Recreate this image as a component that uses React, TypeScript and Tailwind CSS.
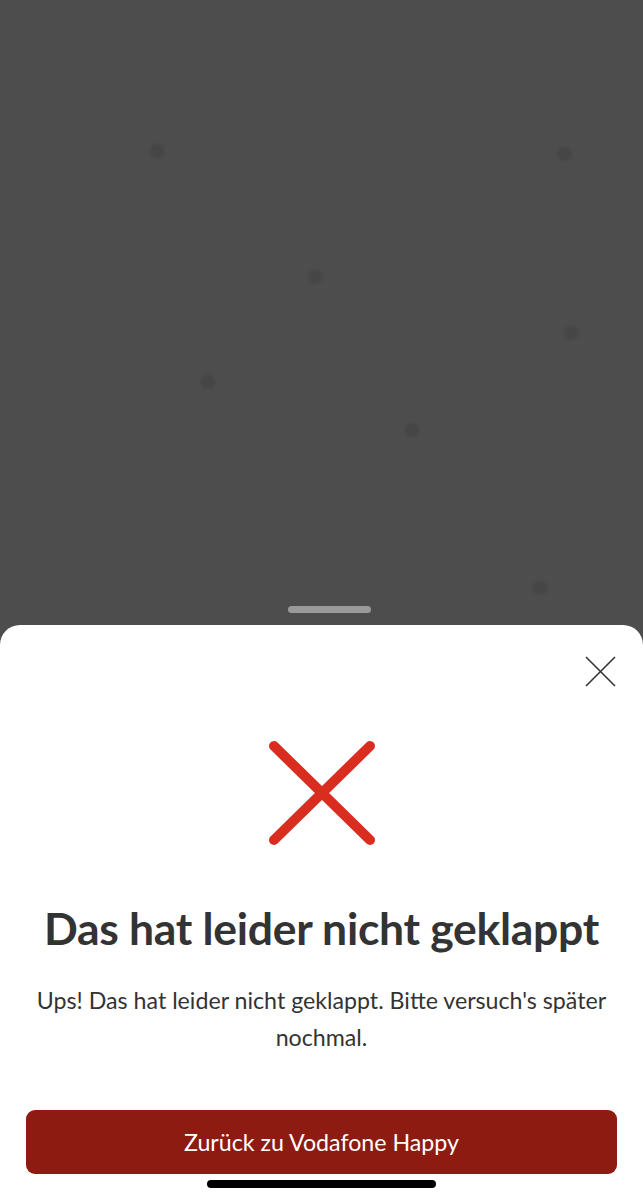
import React from 'react';

const dots = [
  { x: 157, y: 151 },
  { x: 565, y: 154 },
  { x: 315, y: 277 },
  { x: 571, y: 333 },
  { x: 208, y: 382 },
  { x: 412, y: 430 },
  { x: 540, y: 588 },
];

const App: React.FC = () => {
  return (
    <div className="w-[643px] h-[1200px] flex flex-col bg-[#4d4d4d] overflow-hidden" style={{ fontFamily: 'Lato, "Open Sans", sans-serif' }}>
      <div className="relative h-[625px] shrink-0">
        {dots.map((d, i) => (
          <span
            key={i}
            className="absolute w-[14px] h-[14px] rounded-full bg-[#464646] blur-[1px]"
            style={{ left: d.x - 7, top: d.y - 7 }}
          />
        ))}
        <div className="absolute left-[288px] top-[606px] w-[83px] h-[7px] rounded-full bg-[#9a9a9a]" />
      </div>

      <div className="flex-1 bg-white rounded-t-[20px] flex flex-col items-center px-[26px]">
        <div className="w-full flex justify-end pt-[31px] pr-[1px]">
          <button className="w-[31px] h-[31px] text-[#333]">
            <svg viewBox="0 0 31 31" width="31" height="31" fill="none" stroke="currentColor" strokeWidth="1.6">
              <path d="M1 1 L30 30 M30 1 L1 30" />
            </svg>
          </button>
        </div>

        <svg className="mt-[52px]" viewBox="0 0 110 108" width="110" height="108" fill="none" stroke="#d92d20" strokeWidth="10" strokeLinecap="round">
          <path d="M7 7 L103 101 M103 7 L7 101" />
        </svg>

        <h1 className="mt-[55px] text-[44.5px] leading-[52px] font-bold text-[#333] tracking-[-0.3px] whitespace-nowrap">
          Das hat leider nicht geklappt
        </h1>

        <p className="mt-[28px] text-[23.2px] leading-[37px] text-[#333] text-center">
          Ups! Das hat leider nicht geklappt. Bitte versuch's später nochmal.
        </p>

        <button className="mt-[54px] w-full h-[64px] rounded-[9px] bg-[#8e1b12] text-white text-[23.2px] flex items-center justify-center">
          Zurück zu Vodafone Happy
        </button>

        <div className="mt-[6px] w-[229px] h-[8px] rounded-full bg-black" />
      </div>
    </div>
  );
};

export default App;
